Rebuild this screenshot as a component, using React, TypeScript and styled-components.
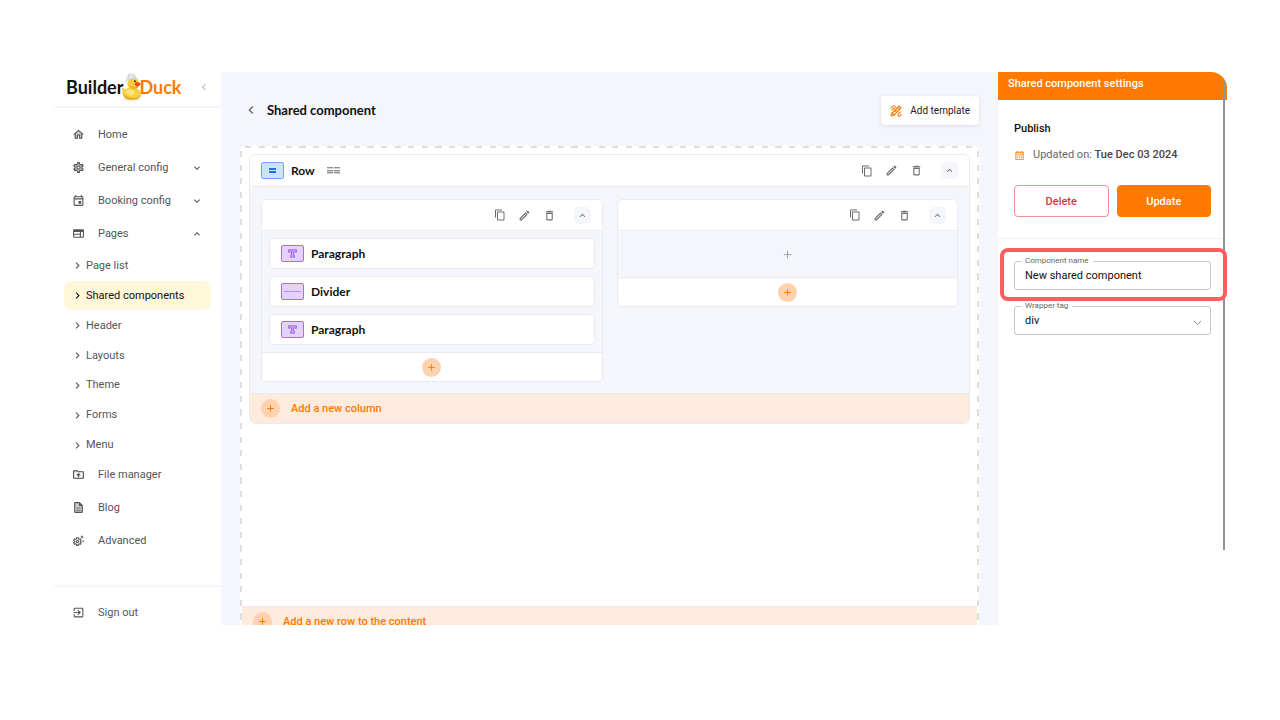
import React from "react";
import styled, { createGlobalStyle, css } from "styled-components";
import {
  MdChevronLeft,
  MdChevronRight,
  MdContentCopy,
  MdDeleteOutline,
  MdDescription,
  MdDriveFolderUpload,
  MdHome,
  MdKeyboardArrowDown,
  MdKeyboardArrowUp,
  MdOutlineAdd,
  MdOutlineCalendarMonth,
  MdOutlineDescription,
  MdOutlineDriveFolderUpload,
  MdOutlineEdit,
  MdOutlineEvent,
  MdOutlineExitToApp,
  MdOutlineHome,
  MdOutlineSettings,
  MdOutlineSettingsSuggest,
  MdOutlineWeb,
  MdSettings,
} from "react-icons/md";

const ORANGE = "#ff7a00";
const SURFACE = "#f4f6fb";
const LINE = "#e9ebf0";
const DASH = "#dedede";

const GlobalStyle = createGlobalStyle`
  *, *::before, *::after { box-sizing: border-box; }
  body {
    margin: 0;
    background: #fff;
    color: #555;
    font: 400 11px/16px Roboto, "Liberation Sans", sans-serif;
  }
  button, input, select { font: inherit; color: inherit; margin: 0; }
  button { border: 0; padding: 0; background: none; cursor: pointer; }
  ul { list-style: none; margin: 0; padding: 0; }
  h1, h2, h3, p { margin: 0; }
  svg { display: block; flex: none; }
`;

const Page = styled.div`
  display: flex;
  height: 100vh;
  padding: 72px 53px 95px 54px;
`;

const Frame = styled.div`
  flex: 1;
  min-width: 0;
  display: grid;
  grid-template-columns: 167px minmax(0, 1fr) 229px;
  grid-template-rows: minmax(0, 1fr);
  overflow: hidden;
`;

/* ---------- sidebar ---------- */

const Sidebar = styled.aside`
  display: flex;
  flex-direction: column;
  background: #fff;
  min-height: 0;
`;

const Brand = styled.div`
  display: flex;
  align-items: flex-start;
  justify-content: space-between;
  height: 36px;
  flex: none;
  padding: 0 10px 0 12px;
  border-bottom: 2px solid ${SURFACE};
`;

const Logo = styled.a`
  display: flex;
  align-items: center;
  height: 29px;
  color: #111;
  font: 700 18px/24px Lato, sans-serif;
  text-decoration: none;
`;

const LogoAccent = styled.span`
  color: ${ORANGE};
`;

const DuckArt = styled.svg`
  margin: 0 -3px 0 -3px;
`;

const CollapseButton = styled.button`
  height: 29px;
  color: #c4c4c4;
`;

const Nav = styled.nav`
  flex: 1;
  padding: 10px 10px 0;
`;

const navRow = css`
  display: flex;
  align-items: center;
  width: 100%;
  color: #555;
  text-align: left;
  text-decoration: none;
`;

const NavLink = styled.a`
  ${navRow}
  gap: 13px;
  height: 33px;
  padding: 0 8px;
`;

const NavToggle = styled.button`
  ${navRow}
  gap: 13px;
  height: 33px;
  padding: 0 8px;
`;

const NavLabel = styled.span`
  flex: 1;
`;

const IconStack = styled.span`
  display: grid;
  width: 13px;
  height: 13px;
  & > * { grid-area: 1 / 1; }
  & > :nth-child(2) { opacity: 0.3; }
`;

const SubList = styled.ul`
  display: flex;
  flex-direction: column;
  height: 210px;
  padding-top: 1px;
  margin-bottom: -2px;
`;

const SubItem = styled.li`
  flex: 1;
  display: flex;
  align-items: center;
`;

const SubLink = styled.a<{ $active?: boolean }>`
  ${navRow}
  height: 29px;
  gap: 2px;
  padding-left: 7px;
  border-radius: 8px;
  color: ${(p) => (p.$active ? "#111" : "#555")};
  background: ${(p) => (p.$active ? "#fff7da" : "transparent")};
`;

const SidebarFooter = styled.div`
  border-top: 2px solid ${SURFACE};
  padding: 9px 10px 0;
  height: 40px;
  flex: none;
`;

/* ---------- main ---------- */

const Main = styled.main`
  display: flex;
  flex-direction: column;
  min-width: 0;
  padding: 24px 19px 0;
  background: ${SURFACE};
`;

const PageHeader = styled.header`
  display: flex;
  align-items: center;
  justify-content: space-between;
  height: 29px;
  margin-bottom: 21px;
  flex: none;
`;

const TitleGroup = styled.div`
  display: flex;
  align-items: center;
  gap: 8px;
  padding: 0 0 2px 3px;
`;

const Title = styled.h1`
  color: #111;
  font: 700 13px/18px Lato, sans-serif;
`;

const BackButton = styled.button`
  color: #666;
`;

const TemplateButton = styled.button`
  display: flex;
  align-items: center;
  gap: 8px;
  height: 29px;
  padding: 0 9px;
  border-radius: 4px;
  background: #fff;
  color: #222;
  font-size: 10px;
  box-shadow: 0 1px 4px rgba(30, 40, 70, 0.12);
`;

const Canvas = styled.section`
  display: flex;
  flex-direction: column;
  flex: none;
  min-height: 490px;
  padding: 8px 2px 0;
  border-radius: 6px 6px 0 0;
  background:
    repeating-linear-gradient(to right, ${DASH} 0 9%, transparent 9% 20%) 5px 0 / 68px 2px repeat-x,
    repeating-linear-gradient(to bottom, ${DASH} 0 9%, transparent 9% 20%) 0 5px / 2px 68px repeat-y,
    repeating-linear-gradient(to bottom, ${DASH} 0 9%, transparent 9% 20%) 100% 5px / 2px 68px repeat-y,
    #fff;
`;

const RowCard = styled.article`
  margin: 0 7px;
  border: 1px solid ${LINE};
  border-radius: 6px;
  overflow: hidden;
`;

const RowHeader = styled.header`
  display: flex;
  align-items: center;
  height: 32px;
  padding: 0 11px;
  border-bottom: 1px solid ${LINE};
  background: #fff;
`;

const Tools = styled.div`
  display: flex;
  align-items: center;
  gap: 12px;
  margin-left: auto;
`;

const ToolButton = styled.button`
  color: #6c6c6c;
`;

const CollapseToggle = styled.button`
  display: grid;
  place-items: center;
  width: 17px;
  height: 17px;
  margin-left: 6px;
  border-radius: 5px;
  background: ${SURFACE};
  color: #666;
`;

const Badge = styled.span<{ $tone: "blue" | "purple" }>`
  display: grid;
  place-items: center;
  width: 23px;
  height: 17px;
  border-radius: 2px;
  border: 1px solid ${(p) => (p.$tone === "blue" ? "#6ea7f8" : "#a56cf0")};
  background: ${(p) => (p.$tone === "blue" ? "#cfe2fd" : "#e3d3fb")};
  color: ${(p) => (p.$tone === "blue" ? "#1a73e8" : "#a56cf0")};
`;

const BlockName = styled.h2`
  margin-left: 7px;
  color: #111;
  font: 700 12px/16px Lato, sans-serif;
`;

const GridButton = styled.button`
  margin-left: 12px;
  color: #8b8e96;
`;

const RowBody = styled.div`
  display: grid;
  grid-template-columns: 1fr 1fr;
  align-items: start;
  gap: 14px;
  padding: 12px 11px 11px;
  background: ${SURFACE};
`;

const ColumnCard = styled.section`
  border: 1px solid ${LINE};
  border-radius: 6px;
  overflow: hidden;
`;

const ColumnHeader = styled.header`
  display: flex;
  align-items: center;
  height: 31px;
  padding: 0 11px;
  background: #fff;
  border-bottom: 1px solid ${LINE};
`;

const ItemList = styled.ul`
  display: flex;
  flex-direction: column;
  gap: 7px;
  padding: 7px;
`;

const Item = styled.li`
  display: flex;
  align-items: center;
  height: 31px;
  padding: 0 11px;
  border: 1px solid ${LINE};
  border-radius: 5px;
  background: #fff;
`;

const EmptyDrop = styled.button`
  display: grid;
  place-items: center;
  width: 100%;
  height: 46px;
  color: #a2a4a9;
`;

const ColumnFooter = styled.footer`
  display: grid;
  place-items: center;
  height: 29px;
  border-top: 1px solid ${LINE};
  background: #fff;
`;

const Circle = styled.span`
  display: grid;
  place-items: center;
  width: 19px;
  height: 19px;
  border-radius: 50%;
  background: #ffd2ad;
  color: ${ORANGE};
`;

const AddBar = styled.button<{ $wide?: boolean }>`
  display: flex;
  align-items: center;
  gap: 11px;
  width: 100%;
  height: 30px;
  margin-top: ${(p) => (p.$wide ? "auto" : "0")};
  padding: 0 12px 0 11px;
  border-top: 1px solid ${LINE};
  background: #ffebde;
  color: ${ORANGE};
  font-weight: 500;
`;

/* ---------- settings panel ---------- */

const Panel = styled.aside`
  position: relative;
  background: #fff;
`;

const PanelScroll = styled.span`
  position: absolute;
  top: 8px;
  right: 2px;
  bottom: 75px;
  width: 2px;
  background: #949494;
`;

const PanelHeader = styled.header`
  height: 28px;
  padding: 4px 10px;
  border-top-right-radius: 16px;
  background: ${ORANGE};
  color: #fff;
  font-weight: 500;
`;

const PublishSection = styled.section`
  padding: 21px 16px;
  border-bottom: 1px solid #eff0f4;
`;

const SectionTitle = styled.h3`
  color: #111;
  font: inherit;
  font-weight: 500;
`;

const Updated = styled.p`
  display: flex;
  align-items: center;
  gap: 8px;
  margin: 10px 0 22px;
  padding-left: 0;
  color: #666;
  svg { color: ${ORANGE}; }
  strong { font-weight: 500; color: #444; }
`;

const Actions = styled.div`
  display: grid;
  grid-template-columns: 1fr 1fr;
  gap: 8px;
`;

const ActionButton = styled.button<{ $filled?: boolean }>`
  height: 32px;
  padding-top: 1px;
  border-radius: 4px;
  border: 1px solid ${(p) => (p.$filled ? ORANGE : "#ee8f93")};
  background: ${(p) => (p.$filled ? ORANGE : "#fff")};
  color: ${(p) => (p.$filled ? "#fff" : "#d9363e")};
  font-weight: 500;
`;

const Fields = styled.form`
  display: flex;
  flex-direction: column;
  gap: 16px;
  padding: 22px 16px;
`;

const Field = styled.div`
  position: relative;
`;

const FieldLabel = styled.label`
  position: absolute;
  top: -5px;
  left: 7px;
  padding: 0 4px;
  background: #fff;
  color: #666;
  font-size: 8px;
  line-height: 10px;
`;

const control = css`
  display: block;
  width: 100%;
  height: 29px;
  padding: 0 10px;
  border: 1px solid #c8c8c8;
  border-radius: 3px;
  background: #fff;
  color: #111;
  outline: 0;
`;

const TextInput = styled.input`
  ${control}
`;

const SelectInput = styled.select`
  ${control}
  appearance: none;
`;

const SelectArrow = styled.svg`
  position: absolute;
  right: 9px;
  top: 14px;
  pointer-events: none;
`;

const Highlight = styled.span`
  position: absolute;
  z-index: 2;
  inset: -13px -16px -11px -14px;
  border: 4px solid #ff5c5c;
  border-radius: 8px;
  pointer-events: none;
`;

/* ---------- drawings ---------- */

const Duck = () => (
  <DuckArt width="22" height="29" viewBox="208 34 66 88" aria-hidden="true">
    <ellipse cx="243" cy="117" rx="26" ry="4" fill="#e4dcc8" />
    <path d="M214 80c7 6 14 6 21 2 14-2 37 2 37 19 0 12-12 18-29 18-17 0-27-8-28-22 0-7-2-12-1-17z" fill="#f8cf45" />
    <path d="M216 96c2 14 12 21 28 21 13 0 24-4 27-12-6 6-14 8-24 8-14 0-25-6-31-17z" fill="#dfa323" />
    <path d="M224 91c8-5 24-5 29 3 2 7-6 12-14 11-8-1-12-8-15-14z" fill="#fbe27a" />
    <circle cx="248" cy="70" r="18" fill="#f9cb3f" />
    <path d="M234 72c3 9 10 14 20 13 5-1 8-3 10-6-9 3-21 2-30-7z" fill="#e9a92c" />
    <path d="M255 66c6-2 12 0 15 3-2 8-8 10-14 8-4-3-4-8-1-11z" fill="#ea4b1f" />
    <circle cx="253" cy="62" r="3" fill="#3a2712" />
    <path d="M226 62c-1-13 6-23 16-24 9 0 15 7 17 17-9-3-22-1-33 7z" fill="#e3e5e8" />
    <path d="M238 39c-5 6-6 12-5 19M247 39c4 4 6 9 6 14" stroke="#b9bcc2" strokeWidth="2" fill="none" />
    <path d="M224 64c10-9 25-12 37-8" stroke="#c9ccd1" strokeWidth="3" fill="none" />
  </DuckArt>
);

const TemplateIcon = () => (
  <svg width="12" height="12" viewBox="0 0 24 24" fill="none" stroke={ORANGE} strokeWidth="2.2" strokeLinecap="round" strokeLinejoin="round" aria-hidden="true">
    <path d="M2 22l1-5L18 2l4 4L7 21z" />
    <path d="M15 5l4 4M4 16l4 4M10 13l3-3" />
    <path d="M2 6c2-4 5-5 7-4s2 3 0 4-4 2-5 4" />
    <path d="M22 14c-2 0-4 1-5 3s-2 4 0 5 4-1 5-3" />
  </svg>
);

const TextGlyph = () => (
  <svg width="9" height="9" viewBox="0 0 18 18" fill="none" stroke="currentColor" strokeWidth="2" strokeLinejoin="round" aria-hidden="true">
    <path d="M1 1.500h16v5h-3.500V5H11v7.500h2v4H5v-4h2V5H4.500v1.500H1z" fill="#c9a6f7" />
  </svg>
);

const DividerGlyph = () => (
  <svg width="17" height="1" aria-hidden="true">
    <rect width="17" height="1" fill="#b98df3" />
  </svg>
);

const RowGlyph = () => (
  <svg width="7" height="5" aria-hidden="true">
    <rect width="7" height="2" fill="currentColor" />
    <rect y="3" width="7" height="2" fill="currentColor" />
  </svg>
);

const GridGlyph = () => (
  <svg width="13" height="7" fill="currentColor" aria-hidden="true">
    {[0, 7].map((x) =>
      [0, 3, 5].map((y) => <rect key={`${x}-${y}`} x={x} y={y} width="6" height="1.400" />)
    )}
  </svg>
);

/* ---------- composition ---------- */

const ICON = 13;

const ToolSet = () => (
  <Tools>
    <ToolButton aria-label="Duplicate"><MdContentCopy size={12} /></ToolButton>
    <ToolButton aria-label="Edit"><MdOutlineEdit size={13} /></ToolButton>
    <ToolButton aria-label="Delete"><MdDeleteOutline size={13} /></ToolButton>
    <CollapseToggle aria-label="Collapse"><MdKeyboardArrowUp size={11} /></CollapseToggle>
  </Tools>
);

const subPages = ["Page list", "Shared components", "Header", "Layouts", "Theme", "Forms", "Menu"];

const blocks = [
  { name: "Paragraph", glyph: <TextGlyph /> },
  { name: "Divider", glyph: <DividerGlyph /> },
  { name: "Paragraph", glyph: <TextGlyph /> },
];

export default function App() {
  return (
    <>
      <GlobalStyle />
      <Page>
        <Frame>
          <Sidebar>
            <Brand>
              <Logo href="#">
                Builder
                <Duck />
                <LogoAccent>Duck</LogoAccent>
              </Logo>
              <CollapseButton aria-label="Collapse menu"><MdChevronLeft size={14} /></CollapseButton>
            </Brand>
            <Nav>
              <NavLink href="#">
                <IconStack><MdOutlineHome size={ICON} /><MdHome size={ICON} /></IconStack>
                <NavLabel>Home</NavLabel>
              </NavLink>
              <NavToggle>
                <IconStack><MdOutlineSettings size={ICON} /><MdSettings size={ICON} /></IconStack>
                <NavLabel>General config</NavLabel>
                <MdKeyboardArrowDown size={12} />
              </NavToggle>
              <NavToggle>
                <IconStack><MdOutlineEvent size={ICON} /></IconStack>
                <NavLabel>Booking config</NavLabel>
                <MdKeyboardArrowDown size={12} />
              </NavToggle>
              <NavToggle aria-expanded="true">
                <IconStack><MdOutlineWeb size={ICON} /></IconStack>
                <NavLabel>Pages</NavLabel>
                <MdKeyboardArrowUp size={12} />
              </NavToggle>
              <SubList>
                {subPages.map((name) => (
                  <SubItem key={name}>
                    <SubLink href="#" $active={name === "Shared components"}>
                      <MdChevronRight size={13} />
                      {name}
                    </SubLink>
                  </SubItem>
                ))}
              </SubList>
              <NavLink href="#">
                <IconStack><MdOutlineDriveFolderUpload size={ICON} /><MdDriveFolderUpload size={ICON} /></IconStack>
                <NavLabel>File manager</NavLabel>
              </NavLink>
              <NavLink href="#">
                <IconStack><MdOutlineDescription size={ICON} /><MdDescription size={ICON} /></IconStack>
                <NavLabel>Blog</NavLabel>
              </NavLink>
              <NavLink href="#">
                <IconStack><MdOutlineSettingsSuggest size={ICON} /></IconStack>
                <NavLabel>Advanced</NavLabel>
              </NavLink>
            </Nav>
            <SidebarFooter>
              <NavLink href="#">
                <IconStack><MdOutlineExitToApp size={ICON} /></IconStack>
                <NavLabel>Sign out</NavLabel>
              </NavLink>
            </SidebarFooter>
          </Sidebar>

          <Main>
            <PageHeader>
              <TitleGroup>
                <BackButton aria-label="Back"><MdChevronLeft size={16} /></BackButton>
                <Title>Shared component</Title>
              </TitleGroup>
              <TemplateButton>
                <TemplateIcon />
                Add template
              </TemplateButton>
            </PageHeader>

            <Canvas>
              <RowCard>
                <RowHeader>
                  <Badge $tone="blue"><RowGlyph /></Badge>
                  <BlockName>Row</BlockName>
                  <GridButton aria-label="Column layout"><GridGlyph /></GridButton>
                  <ToolSet />
                </RowHeader>
                <RowBody>
                  <ColumnCard>
                    <ColumnHeader><ToolSet /></ColumnHeader>
                    <ItemList>
                      {blocks.map((block, i) => (
                        <Item key={i}>
                          <Badge $tone="purple">{block.glyph}</Badge>
                          <BlockName>{block.name}</BlockName>
                        </Item>
                      ))}
                    </ItemList>
                    <ColumnFooter>
                      <button aria-label="Add block"><Circle><MdOutlineAdd size={11} /></Circle></button>
                    </ColumnFooter>
                  </ColumnCard>
                  <ColumnCard>
                    <ColumnHeader><ToolSet /></ColumnHeader>
                    <EmptyDrop aria-label="Drop a block"><MdOutlineAdd size={13} /></EmptyDrop>
                    <ColumnFooter>
                      <button aria-label="Add block"><Circle><MdOutlineAdd size={11} /></Circle></button>
                    </ColumnFooter>
                  </ColumnCard>
                </RowBody>
                <AddBar>
                  <Circle><MdOutlineAdd size={11} /></Circle>
                  Add a new column
                </AddBar>
              </RowCard>
              <AddBar $wide>
                <Circle><MdOutlineAdd size={11} /></Circle>
                Add a new row to the content
              </AddBar>
            </Canvas>
          </Main>

          <Panel>
            <PanelHeader>Shared component settings</PanelHeader>
            <PublishSection>
              <SectionTitle>Publish</SectionTitle>
              <Updated>
                <MdOutlineCalendarMonth size={11} />
                <span>Updated on: <strong>Tue Dec 03 2024</strong></span>
              </Updated>
              <Actions>
                <ActionButton>Delete</ActionButton>
                <ActionButton $filled>Update</ActionButton>
              </Actions>
            </PublishSection>
            <Fields>
              <Field>
                <TextInput id="component-name" defaultValue="New shared component" />
                <FieldLabel htmlFor="component-name">Component name</FieldLabel>
                <Highlight />
              </Field>
              <Field>
                <SelectInput id="wrapper-tag" defaultValue="div">
                  <option>div</option>
                </SelectInput>
                <FieldLabel htmlFor="wrapper-tag">Wrapper tag</FieldLabel>
                <SelectArrow width="9" height="6" viewBox="0 0 9 6" fill="none" stroke="#888" aria-hidden="true">
                  <path d="M1 1l3.500 3.500L8 1" />
                </SelectArrow>
              </Field>
            </Fields>
            <PanelScroll />
          </Panel>
        </Frame>
      </Page>
    </>
  );
}
